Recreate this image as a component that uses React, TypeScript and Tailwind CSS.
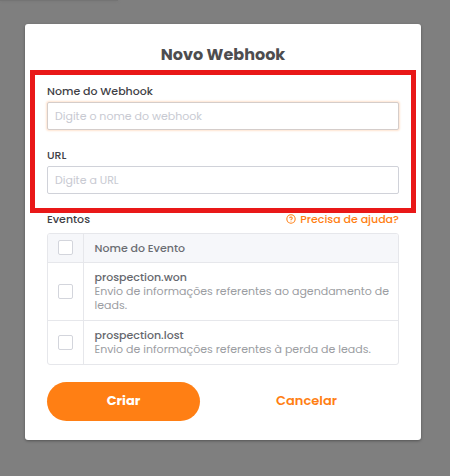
import { CircleHelp } from "lucide-react";

const events = [
  {
    name: "prospection.won",
    description: "Envio de informações referentes ao agendamento de leads.",
  },
  {
    name: "prospection.lost",
    description: "Envio de informações referentes à perda de leads.",
  },
];

function Checkbox({ label }: { label: string }) {
  return (
    <input
      type="checkbox"
      aria-label={label}
      className="block mx-auto size-[15px] appearance-none rounded-xs border border-[#d3d5dc] bg-white checked:bg-[#ff7f14]"
    />
  );
}

function Field({
  id,
  label,
  placeholder,
  className,
}: {
  id: string;
  label: string;
  placeholder: string;
  className: string;
}) {
  return (
    <div>
      <label
        htmlFor={id}
        className="block h-[19px] text-[11px] leading-4 font-medium text-[#3f4146]"
      >
        {label}
      </label>
      <input
        id={id}
        type="text"
        placeholder={placeholder}
        className={`block h-7 w-full rounded-xs border bg-white px-[7px] text-[11px] text-[#4b4d52] outline-none placeholder:text-[#c8cad2] ${className}`}
      />
    </div>
  );
}

export default function App() {
  return (
    <div className="min-h-screen bg-[#7f7f7f] px-[25px] pt-6 pb-9 font-['Poppins','Inter',sans-serif]">
      <div className="fixed top-0 left-0 h-px w-[118px] bg-[#747474] shadow-[0_0_3px_#707070]" />
      <main
        role="dialog"
        aria-labelledby="title"
        className="mr-1 rounded-[3px] bg-white px-[22px] pb-[19px] shadow-[0_1px_3px_rgba(0,0,0,0.35)]"
      >
        <h1
          id="title"
          className="pt-[19px] pb-[3px] text-center text-[16px] leading-6 font-bold text-[#4d4d4f]"
        >
          Novo Webhook
        </h1>

        <form>
          <div className="-mx-[17px] flex flex-col gap-[17px] border-5 border-[#e91818] px-3 pt-2 pb-[14px]">
            <Field
              id="name"
              label="Nome do Webhook"
              placeholder="Digite o nome do webhook"
              className="border-[#d5cdca] shadow-[0_0_2px_1px_#ffe4d0]"
            />
            <Field
              id="url"
              label="URL"
              placeholder="Digite a URL"
              className="border-[#d0d2d9]"
            />
          </div>

          <div className="flex h-5 items-start justify-between text-[11px] leading-3 font-medium">
            <h2 className="text-[#3f4146]">Eventos</h2>
            <a href="#ajuda" className="flex items-center gap-1 text-[#ff7f14]">
              <CircleHelp size={10} strokeWidth={2.5} />
              Precisa de ajuda?
            </a>
          </div>

          <div className="overflow-hidden rounded-[3px] border border-[#e6e7eb]">
            <table className="w-full border-collapse text-left text-[11px] leading-[14px]">
              <thead className="bg-[#f6f7fa]">
                <tr className="h-7 border-b border-[#e6e7eb]">
                  <th className="w-[35px] border-r border-[#e6e7eb]">
                    <Checkbox label="Selecionar todos" />
                  </th>
                  <th className="pl-[11px] font-medium text-[#6b6d73]">
                    Nome do Evento
                  </th>
                </tr>
              </thead>
              <tbody>
                {events.map((event) => (
                  <tr
                    key={event.name}
                    className="border-b border-[#e6e7eb] last:border-b-0"
                  >
                    <td className="border-r border-[#e6e7eb]">
                      <Checkbox label={event.name} />
                    </td>
                    <td className="pt-[7px] pr-1 pb-2 pl-[11px] text-[#9b9da2]">
                      <p className="font-medium text-[#66686e]">{event.name}</p>
                      <p>{event.description}</p>
                    </td>
                  </tr>
                ))}
              </tbody>
            </table>
          </div>

          <div className="mt-[17px] mr-4 grid grid-cols-2 gap-[30px] text-[13px]">
            <button
              type="button"
              className="h-[39px] rounded-full bg-[#ff7f14] font-bold text-white"
            >
              Criar
            </button>
            <button type="button" className="h-[39px] font-semibold text-[#ff7f14]">
              Cancelar
            </button>
          </div>
        </form>
      </main>
    </div>
  );
}
